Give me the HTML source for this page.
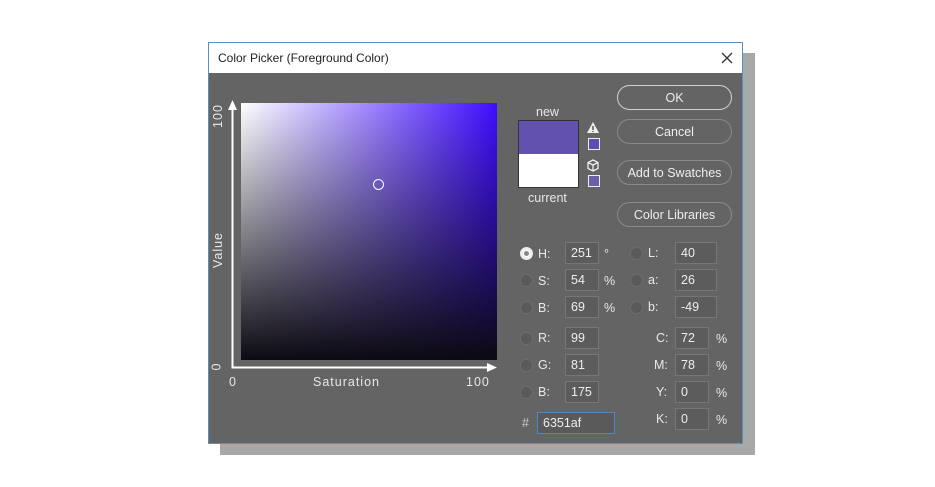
<!DOCTYPE html>
<html><head><meta charset="utf-8"><style>
*{margin:0;padding:0;box-sizing:border-box}
body{width:935px;height:487px;background:#fff;position:relative;overflow:hidden;font-family:"Liberation Sans",sans-serif;color:#e6e6e6;font-size:12px}
.a{position:absolute}
#shadow{left:220px;top:53px;width:535px;height:402px;background:#a8a8a8}
#dlg{left:208px;top:42px;width:535px;height:402px;border:1px solid #5a8fc4;background:#646464}
#title{left:0;top:0;width:533px;height:30px;background:#fff;color:#222;font-size:12px;line-height:30px;padding-left:9px}
.btn{position:absolute;left:408px;width:115px;height:25px;border:1.5px solid #8a8a8a;border-radius:13px;text-align:center;line-height:24px;font-size:12.5px;color:#eee}
.fld{position:absolute;height:22px;background:#5c5c5c;border:1px solid #767676;color:#eee;font-size:12.5px;line-height:20px;padding-left:5px}
.lbl{position:absolute;font-size:12.5px;color:#e8e8e8}
.rad{position:absolute;width:13px;height:13px;border-radius:50%;background:#5a5a5a;border:1px solid #6c6c6c}
</style></head><body>
<div class="a" id="shadow"></div>
<div class="a" id="dlg">
<div class="a" id="title">Color Picker (Foreground Color)</div>
<svg class="a" style="left:511px;top:8px" width="14" height="14"><path d="M2 2L12 12M12 2L2 12" stroke="#333" stroke-width="1.3"/></svg>
<div class="a" style="left:32px;top:60px;width:256px;height:257px;background:linear-gradient(to bottom,rgba(0,0,0,0),#0c0a12),linear-gradient(to right,#fff,#3e0dff)"></div>
<div class="a" style="left:164px;top:136px;width:11px;height:11px;border:1px solid #fff;border-radius:50%"></div>
<svg class="a" style="left:0;top:55px" width="300" height="275">
<path d="M23.5 10V269.5H280" stroke="#fff" stroke-width="2" fill="none"/>
<path d="M19 12L23.5 2L28 12Z M278 265L288 269.5L278 274Z" fill="#fff"/>
</svg>
<div class="lbl" style="left:-6px;top:66px;transform:rotate(-90deg);width:30px;text-align:center;letter-spacing:1px">100</div>
<div class="lbl" style="left:-14px;top:200px;transform:rotate(-90deg);width:46px;text-align:center;letter-spacing:1px">Value</div>
<div class="lbl" style="left:4px;top:317px;transform:rotate(-90deg)">0</div>
<div class="lbl" style="left:20px;top:332px">0</div>
<div class="lbl" style="left:104px;top:332px;letter-spacing:1px">Saturation</div>
<div class="lbl" style="left:257px;top:332px;letter-spacing:1px">100</div>
<div class="lbl" style="left:327px;top:62px">new</div>
<div class="a" style="left:309px;top:77px;width:61px;height:68px;border:1px solid #333;background:linear-gradient(#6351af 0,#6351af 50%,#fff 50%)"></div>
<div class="lbl" style="left:319px;top:148px">current</div>
<svg class="a" style="left:377px;top:78px" width="14" height="14"><path d="M7 1L13 12H1Z" fill="#eee"/><path d="M7 5V9M7 10V11" stroke="#555" stroke-width="1.5"/></svg>
<div class="a" style="left:379px;top:95px;width:12px;height:12px;border:1px solid #eee;background:#5b4fb0"></div>
<svg class="a" style="left:378px;top:116px" width="12" height="13"><path d="M6 1L11 3.5V9.5L6 12L1 9.5V3.5Z M1 3.5L6 6L11 3.5 M6 6V12" stroke="#eee" stroke-width="1.3" fill="none"/></svg>
<div class="a" style="left:379px;top:132px;width:12px;height:12px;border:1px solid #eee;background:#6a5fa8"></div>
<div class="btn" style="top:42px;border-color:#d0d0d0">OK</div>
<div class="btn" style="top:76px">Cancel</div>
<div class="btn" style="top:117px">Add to Swatches</div>
<div class="btn" style="top:159px">Color Libraries</div>
<div class="rad" style="left:311px;top:204px;background:#fff;border:3px solid #eee"></div>
<div class="a" style="left:315px;top:208px;width:5px;height:5px;border-radius:50%;background:#888"></div>
<div class="lbl" style="left:329px;top:204px">H:</div><div class="fld" style="left:356px;top:199px;width:34px">251</div><div class="lbl" style="left:395px;top:204px">°</div>
<div class="rad" style="left:311px;top:231px"></div><div class="lbl" style="left:329px;top:231px">S:</div><div class="fld" style="left:356px;top:226px;width:34px">54</div><div class="lbl" style="left:395px;top:231px">%</div>
<div class="rad" style="left:311px;top:258px"></div><div class="lbl" style="left:329px;top:258px">B:</div><div class="fld" style="left:356px;top:253px;width:34px">69</div><div class="lbl" style="left:395px;top:258px">%</div>
<div class="rad" style="left:421px;top:204px"></div><div class="lbl" style="left:439px;top:203px">L:</div><div class="fld" style="left:466px;top:199px;width:42px">40</div>
<div class="rad" style="left:421px;top:231px"></div><div class="lbl" style="left:439px;top:230px">a:</div><div class="fld" style="left:466px;top:226px;width:42px">26</div>
<div class="rad" style="left:421px;top:258px"></div><div class="lbl" style="left:439px;top:257px">b:</div><div class="fld" style="left:466px;top:253px;width:42px">-49</div>
<div class="rad" style="left:311px;top:289px"></div><div class="lbl" style="left:329px;top:288px">R:</div><div class="fld" style="left:356px;top:284px;width:34px">99</div>
<div class="rad" style="left:311px;top:316px"></div><div class="lbl" style="left:329px;top:315px">G:</div><div class="fld" style="left:356px;top:311px;width:34px">81</div>
<div class="rad" style="left:311px;top:343px"></div><div class="lbl" style="left:329px;top:342px">B:</div><div class="fld" style="left:356px;top:338px;width:34px">175</div>
<div class="lbl" style="left:313px;top:373px;color:#ccc">#</div>
<div class="fld" style="left:328px;top:369px;width:78px;border-color:#4f86c6;background:#5a5a5a">6351af</div>
<div class="lbl" style="left:447px;top:288px">C:</div><div class="fld" style="left:466px;top:284px;width:34px">72</div><div class="lbl" style="left:507px;top:289px">%</div>
<div class="lbl" style="left:445px;top:315px">M:</div><div class="fld" style="left:466px;top:311px;width:34px">78</div><div class="lbl" style="left:507px;top:316px">%</div>
<div class="lbl" style="left:447px;top:342px">Y:</div><div class="fld" style="left:466px;top:338px;width:34px">0</div><div class="lbl" style="left:507px;top:343px">%</div>
<div class="lbl" style="left:447px;top:369px">K:</div><div class="fld" style="left:466px;top:365px;width:34px">0</div><div class="lbl" style="left:507px;top:370px">%</div>
</div>
</body></html>
